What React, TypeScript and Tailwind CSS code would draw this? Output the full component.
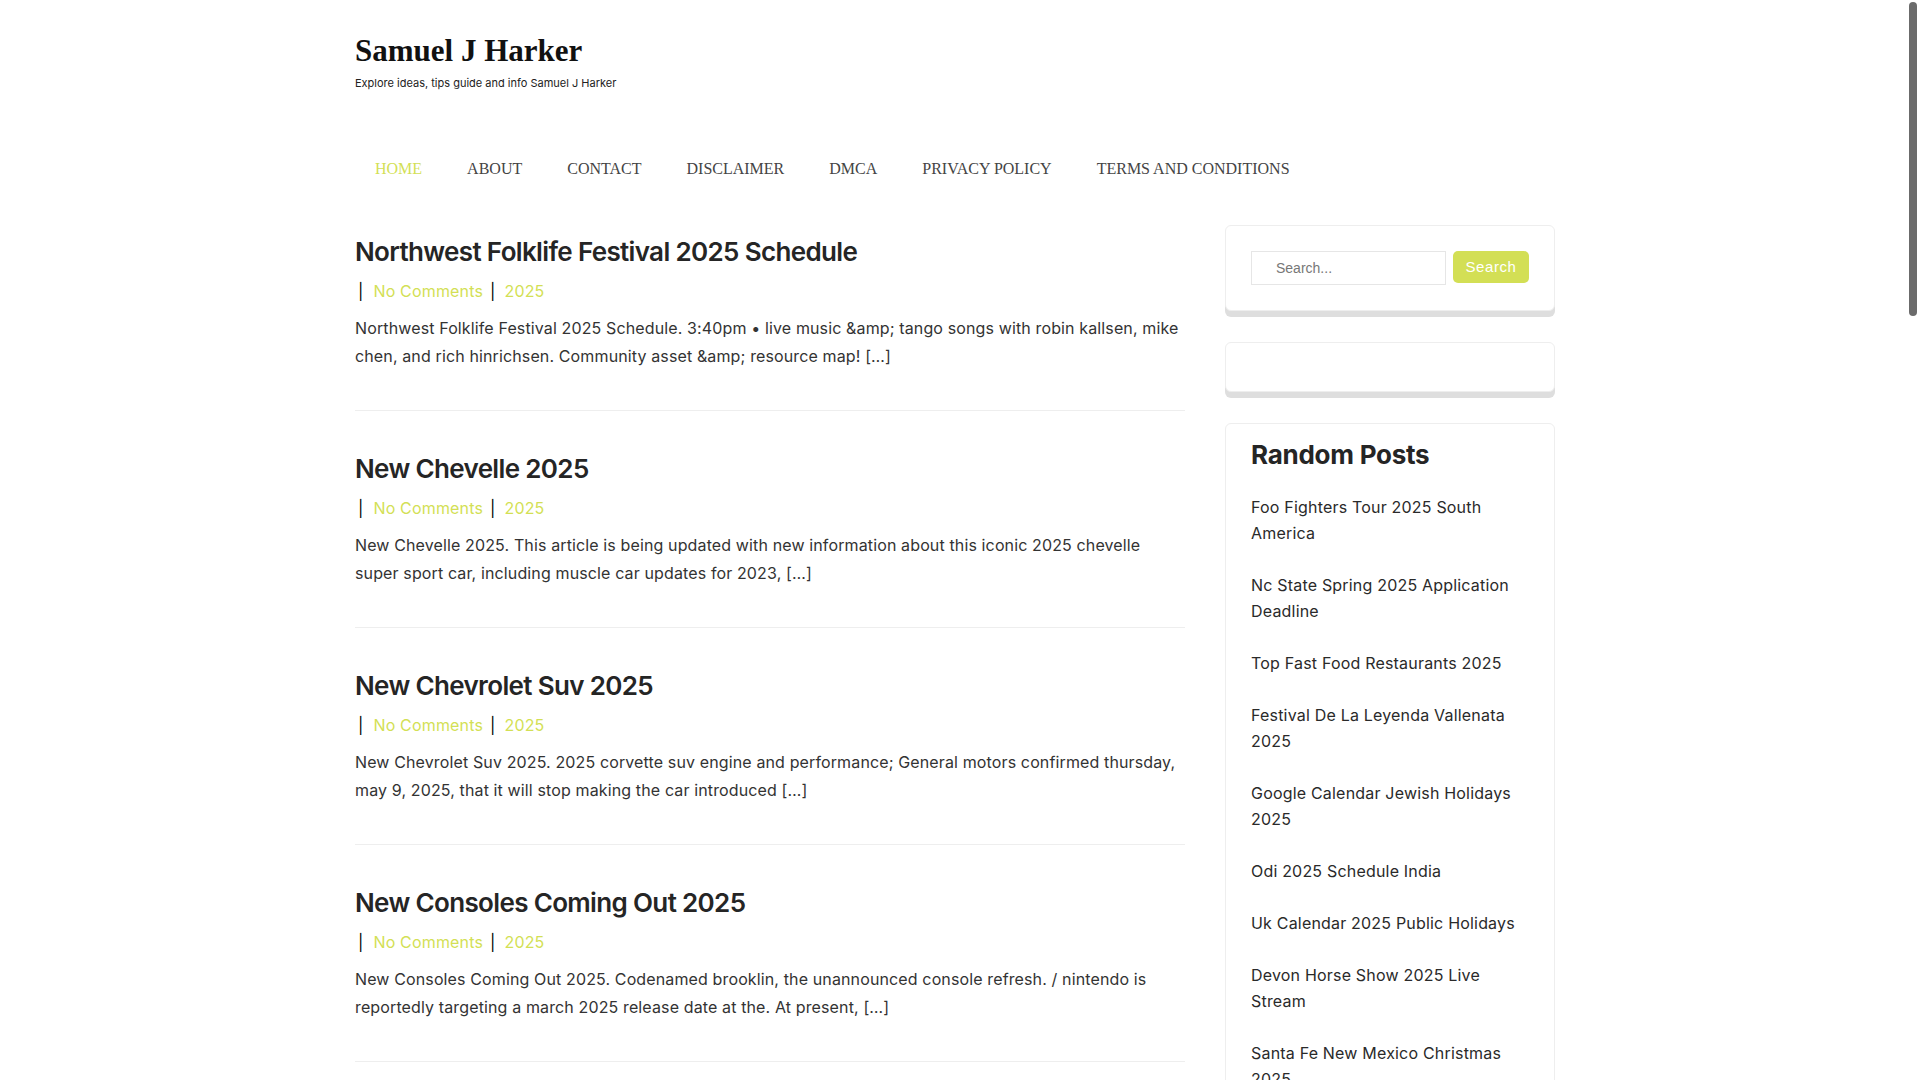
import * as React from "react";

const navItems = [
  "HOME",
  "ABOUT",
  "CONTACT",
  "DISCLAIMER",
  "DMCA",
  "PRIVACY POLICY",
  "TERMS AND CONDITIONS",
];

const posts = [
  {
    title: "Northwest Folklife Festival 2025 Schedule",
    excerpt:
      "Northwest Folklife Festival 2025 Schedule. 3:40pm • live music &amp; tango songs with robin kallsen, mike chen, and rich hinrichsen. Community asset &amp; resource map! […]",
  },
  {
    title: "New Chevelle 2025",
    excerpt:
      "New Chevelle 2025. This article is being updated with new information about this iconic 2025 chevelle super sport car, including muscle car updates for 2023, […]",
  },
  {
    title: "New Chevrolet Suv 2025",
    excerpt:
      "New Chevrolet Suv 2025. 2025 corvette suv engine and performance; General motors confirmed thursday, may 9, 2025, that it will stop making the car introduced […]",
  },
  {
    title: "New Consoles Coming Out 2025",
    excerpt:
      "New Consoles Coming Out 2025. Codenamed brooklin, the unannounced console refresh. / nintendo is reportedly targeting a march 2025 release date at the. At present, […]",
  },
  {
    title: "New Ford Cars 2025",
    excerpt:
      "New Ford Cars 2025. Ford has revealed its lineup of new models, with updates across the range of suvs, trucks and performance cars coming soon, […]",
  },
];

const randomPosts = [
  "Foo Fighters Tour 2025 South America",
  "Nc State Spring 2025 Application Deadline",
  "Top Fast Food Restaurants 2025",
  "Festival De La Leyenda Vallenata 2025",
  "Google Calendar Jewish Holidays 2025",
  "Odi 2025 Schedule India",
  "Uk Calendar 2025 Public Holidays",
  "Devon Horse Show 2025 Live Stream",
  "Santa Fe New Mexico Christmas 2025",
  "Chinese New Year 2025 Animal",
];

const sans = "font-['Inter',_'Open_Sans',_sans-serif]";

function PostItem({ title, excerpt }: { title: string; excerpt: string }) {
  return (
    <article className="mb-10 border-b border-[#eeeeee] pb-10">
      <h2 className="text-[26px] font-semibold leading-[36px] tracking-[-0.025em] text-[#252525]">
        {title}
      </h2>
      <div className="mt-[7px] flex items-center text-[16px] leading-[28px] tracking-[0.01em]">
        <span className="ml-[3px] text-black">|</span>
        <a href="#" className="ml-[10px] text-[#d3df55]">
          No Comments
        </a>
        <span className="ml-[7px] text-black">|</span>
        <a href="#" className="ml-[9px] text-[#d3df55]">
          2025
        </a>
      </div>
      <p className="mt-[9px] text-[16px] leading-[28px] tracking-[0.008em] text-[#333333]">
        {excerpt}
      </p>
    </article>
  );
}

function Widget({ children }: { children?: React.ReactNode }) {
  return (
    <div className="rounded-[6px] border border-[#eeeeee] bg-white shadow-[0_6px_0_#dedede]">
      {children}
    </div>
  );
}

export default function App() {
  return (
    <div className={`relative h-screen overflow-hidden bg-white ${sans}`}>
      <div className="h-full overflow-y-auto pr-[10px]">
        <div className="mx-auto w-[1200px] pb-10">
          <header className="pt-[31px]">
            <h1 className="font-['Liberation_Serif',_'DejaVu_Serif',_serif] text-[31px] font-bold leading-[40px] text-[#111111]">
              Samuel J Harker
            </h1>
            <p className="mt-1 text-[11px] leading-[16px] text-[#222222]">
              Explore ideas, tips guide and info Samuel J Harker
            </p>
            <nav className="mt-[66px] flex gap-[45px] pl-5 font-['Liberation_Serif',_serif] text-[16px] leading-[24px]">
              {navItems.map((item, i) => (
                <a
                  key={item}
                  href="#"
                  className={i === 0 ? "text-[#d3df55]" : "text-[#444444]"}
                >
                  {item}
                </a>
              ))}
            </nav>
          </header>

          <div className="mt-[44px] flex gap-10">
            <main className="w-[830px] pt-[9px]">
              {posts.map((p) => (
                <PostItem key={p.title} title={p.title} excerpt={p.excerpt} />
              ))}
            </main>

            <aside className="flex w-[330px] flex-col gap-[31px]">
              <Widget>
                <form className="flex items-start gap-[7px] p-[25px]">
                  <input
                    type="text"
                    placeholder="Search..."
                    className="h-[34px] w-[195px] border border-[#e6e6e6] px-6 font-['Liberation_Sans',_sans-serif] text-[14px] text-[#555555] outline-none placeholder:text-[#777777]"
                  />
                  <button
                    type="button"
                    className="h-[32px] w-[76px] rounded-[5px] bg-[#d3df55] font-['Liberation_Sans',_sans-serif] text-[15px] tracking-[0.04em] text-white"
                  >
                    Search
                  </button>
                </form>
              </Widget>

              <Widget>
                <div className="h-[48px]" />
              </Widget>

              <Widget>
                <div className="px-[25px] pb-8 pt-[13px]">
                  <h3 className="text-[26px] font-bold leading-[36px] tracking-[-0.01em] text-[#252525]">
                    Random Posts
                  </h3>
                  <ul className="mt-[21px] flex flex-col gap-[26px]">
                    {randomPosts.map((t) => (
                      <li key={t}>
                        <a
                          href="#"
                          className="block text-[16px] leading-[26px] tracking-[0.012em] text-[#2a2a2a]"
                        >
                          {t}
                        </a>
                      </li>
                    ))}
                  </ul>
                </div>
              </Widget>
            </aside>
          </div>
        </div>
      </div>

      {/* scrollbar */}
      <div className="absolute right-0 top-0 flex h-full w-[15px] justify-center bg-white">
        <div className="mt-[2px] h-[314px] w-[8px] rounded-full bg-[#6b6b6b]" />
      </div>
    </div>
  );
}
